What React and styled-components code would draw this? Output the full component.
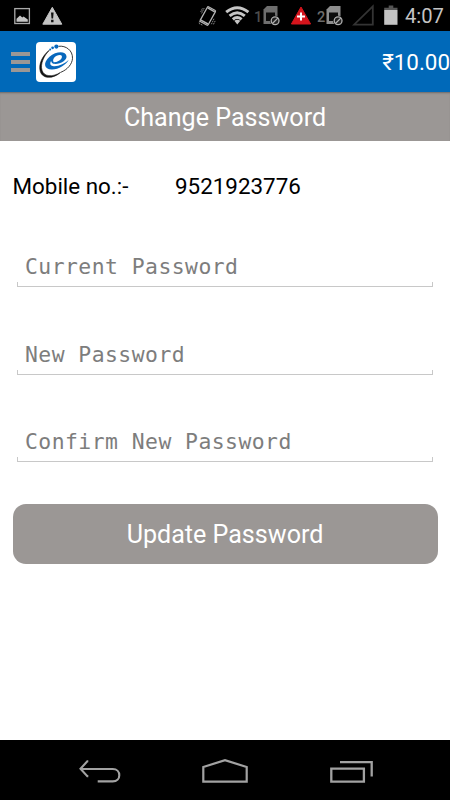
import React from "react";
import styled, { createGlobalStyle } from "styled-components";

const colors = {
  blue: "#0069b9",
  grey: "#9b9795",
  line: "#c8c8c8",
  hint: "#7d7d7d",
  icon: "#c4c4c4",
  nav: "#a2a2a2",
};

const GlobalStyle = createGlobalStyle`
  * {
    box-sizing: border-box;
  }
  body {
    margin: 0;
    background: #fff;
    font-family: Roboto, "Liberation Sans", sans-serif;
  }
`;

const Screen = styled.div`
  display: flex;
  flex-direction: column;
  width: 450px;
  height: 800px;
  overflow: hidden;
  background: #fff;
`;

const StatusBar = styled.div`
  display: flex;
  flex: none;
  height: 31px;
  padding: 0 7px 0 14px;
  background: #000;
`;

const Icon = styled.svg`
  display: block;
  flex: none;
  margin-left: ${(props) => props.$gap || 0}px;
`;

const Spacer = styled.div`
  flex: 1;
`;

const Clock = styled.div`
  width: 38px;
  margin-left: 7px;
  color: ${colors.icon};
  font-size: 20.2px;
  line-height: 33px;
  white-space: nowrap;
`;

const SimNumber = styled.span`
  width: 9px;
  margin-left: ${(props) => props.$gap}px;
  color: ${(props) => props.$color};
  font-size: 14.5px;
  font-weight: 500;
  line-height: 35px;
`;

const Header = styled.header`
  display: flex;
  flex: none;
  align-items: center;
  height: 61px;
  padding-left: 11px;
  background: ${colors.blue};
`;

const Menu = styled.div`
  display: flex;
  flex-direction: column;
  gap: 4px;
  width: 19px;
`;

const MenuLine = styled.span`
  height: 4px;
  background: ${colors.grey};
`;

const Logo = styled.div`
  width: 40px;
  height: 40px;
  margin-left: 6px;
  border-radius: 4px;
  background: #fff;
`;

const Balance = styled.div`
  margin-left: auto;
  padding-top: 1px;
  color: #fff;
  font-size: 22.4px;
  line-height: 30px;
`;

const TitleBar = styled.h1`
  flex: none;
  height: 49px;
  margin: 0;
  background: ${colors.grey};
  box-shadow: inset 0 2px 2px -1px rgba(0, 0, 0, 0.3);
  color: #fff;
  font-size: 25.1px;
  font-weight: 400;
  line-height: 51px;
  text-align: center;
`;

const Form = styled.form`
  display: flex;
  flex: 1;
  flex-direction: column;
  padding: 30px 12.5px 0;
`;

const Mobile = styled.div`
  display: flex;
  height: 30px;
  color: #000;
  font-size: 22.4px;
  line-height: 30px;
`;

const MobileLabel = styled.span`
  width: 162.5px;
`;

const Fields = styled.div`
  display: flex;
  flex-direction: column;
  gap: 47.5px;
  margin: 46px 4.5px 42px;
`;

/* holo style edit box: a bottom line with short ticks at both ends */
const Field = styled.div`
  height: 40px;
  background:
    linear-gradient(${colors.line}, ${colors.line}) left bottom / 1px 5px no-repeat,
    linear-gradient(${colors.line}, ${colors.line}) right bottom / 1px 5px no-repeat,
    linear-gradient(${colors.line}, ${colors.line}) left bottom / 100% 1px no-repeat;
`;

const Input = styled.input`
  display: block;
  width: 100%;
  height: 39px;
  padding: 0 8px;
  border: 0;
  outline: 0;
  background: transparent;
  font-family: "DejaVu Sans Mono", monospace;
  font-size: 21.4px;
  letter-spacing: 0.46px;

  &::placeholder {
    color: ${colors.hint};
    opacity: 1;
  }
`;

const Button = styled.button`
  height: 60px;
  padding: 0;
  border: 0;
  border-radius: 13px;
  background: ${colors.grey};
  color: #fff;
  font-family: inherit;
  font-size: 25.1px;
  line-height: 62px;
`;

const NavBar = styled.nav`
  display: flex;
  flex: none;
  height: 60px;
  padding-left: 78px;
  background: #000;
`;

const Gallery = () => (
  <Icon width="17" height="31" viewBox="14 0 17 31">
    <rect x="14.8" y="8.6" width="14.6" height="14.9" fill="none" stroke="#aaa" strokeWidth="1.3" />
    <path d="M16.5 21.8v-3l3.5-3.2 2.3 2 1.3-1 4.2 3v2.2z" fill={colors.icon} />
  </Icon>
);

const Warning = () => (
  <Icon $gap={11} width="21" height="31" viewBox="42 0 21 31">
    <path d="M52.3 7.3 61.8 24.2H42.8z" fill="#c4c4c4" stroke="#c4c4c4" strokeLinejoin="round" />
    <path d="M51 12.5h2.6l-.5 6h-1.6zM51.1 19.8h2.4v2.4h-2.4z" fill="#111" />
  </Icon>
);

const Vibrate = () => (
  <Icon width="20" height="31" viewBox="197 0 20 31">
    <g transform="rotate(29 207.8 16)" fill="none" stroke="#b5b5b5">
      <rect x="203.2" y="7.6" width="9.2" height="16.8" rx="1.2" strokeWidth="1.3" />
      <path d="M203.8 22.9h8M203.8 9h8" strokeWidth="1.5" />
    </g>
    <path
      d="M204.2 8l-2.6 5.4M202.4 8.4l-1.8 3.8M211.4 24.2l2.6-5.4M213.4 24.4l2-4M199.6 21l-.6 2.4 3.6 1.8"
      fill="none"
      stroke="#858585"
      strokeWidth="1"
      strokeDasharray="1.6 .7"
    />
  </Icon>
);

const Wifi = () => (
  <Icon $gap={8} width="25" height="31" viewBox="225.4 0 25 31">
    <g fill="none" stroke="#c6c6c6" strokeWidth="3">
      <path d="M226.6 12.2Q237.6 3.2 248.8 12.2" />
      <path d="M230 15.9Q237.6 9.6 245.2 15.9" />
      <path d="M233.2 19.3Q237.6 15.6 242 19.3" />
    </g>
    <path d="M234.7 20.8q3-2 6 0l-3 3.8z" fill="#c6c6c6" />
  </Icon>
);

const Sim = ({ body }) => (
  <Icon width="18" height="31" viewBox=".5 0 18 31">
    <path d="M4.5 6H15v18H1V9.5z" fill={body} />
    <path d="M3.5 12.5h9v8.5h-9z" fill="#0b0b0b" />
    <circle cx="12.6" cy="20.8" r="5" fill="#000" />
    <circle cx="12.6" cy="20.8" r="3.9" fill="#222" stroke="#b0b0b0" strokeWidth="1.3" />
    <path d="M9.9 18.1l5.4 5.4" stroke="#b0b0b0" strokeWidth="1.3" transform="matrix(-1 0 0 1 25.2 0)" />
  </Icon>
);

const Alert = () => (
  <Icon $gap={9} width="22" height="31" viewBox="290.8 0 22 31">
    <path d="M301.8 7 311.4 24H292.2z" fill="#d5141c" stroke="#d5141c" strokeLinejoin="round" />
    <path d="M301.8 12.6v8M297.8 16.6h8" stroke="#fff" strokeWidth="2" />
  </Icon>
);

const Signal = () => (
  <Icon $gap={8} width="23" height="31" viewBox="352 0 23 31">
    <path d="M354 24.7h18.8V6.3z" fill="none" stroke="#343434" strokeWidth="1.8" />
  </Icon>
);

const Battery = () => (
  <Icon $gap={9} width="14" height="31" viewBox="384 0 14 31">
    <path d="M388.7 5.5h4.6v2.3h4.2v2.2h-13.3V7.8h4.5z" fill="#555" />
    <path d="M384.2 10h13.3v14.8h-13.3z" fill="#c4c4c4" />
  </Icon>
);

const CompanyMark = () => (
  <svg width="40" height="40" viewBox="0 0 40 40">
    <path
      d="M13.3 8.3C6.5 13.5 2.3 22 4.2 29.3C6.6 37.4 17 37 24.6 30.4C15.8 35.6 8 34.6 6 28.2C4.1 22.2 7.8 13.8 13.3 8.3Z"
      fill="#111"
      stroke="#111"
      strokeWidth=".6"
    />
    <path
      d="M22.5 4.3C30 3.3 36.8 8.5 36.5 16.3C36.2 22.3 31.2 27.7 25 30.2"
      fill="none"
      stroke="#222"
      strokeWidth=".9"
    />
    <path
      fillRule="evenodd"
      d="M17.3 21.8C24 22.8 31 18.4 30.5 14.2C29.9 8.7 20 9.2 13.5 14.7C6.8 20.5 7.8 27.4 15.8 27.5C22.7 27.6 29.8 23 32.8 17.8C29.2 21.2 22.8 24.5 17.8 24.2C14.7 24 13.3 22.2 15.1 19.1C15.6 20.7 16 21.4 17.3 21.8ZM17.7 20.2C15.6 17.4 19.5 13.1 23.8 13C28.6 13.2 25 20.3 17.7 20.2Z"
      fill="#0868bd"
    />
    <circle cx="20.4" cy="4.6" r="2.1" fill="#0868bd" />
    <circle cx="16.6" cy="5.8" r="1.4" fill="#0868bd" />
    <circle cx="14.2" cy="7.4" r="1" fill="#0868bd" />
  </svg>
);

const Back = () => (
  <Icon width="44" height="60" viewBox="78 0 44 60">
    <path
      d="M80.8 29H112.7C121.5 29 121.5 41.4 112.7 41.4H97.7M88.3 21.3h-1L80.5 28.7 87.3 36.1h1"
      fill="none"
      stroke={colors.nav}
      strokeWidth="2.1"
    />
  </Icon>
);

const Home = () => (
  <Icon $gap={79} width="48" height="60" viewBox="201 0 48 60">
    <path d="M203.3 41.6V27L225 20.2 246.7 27V41.6z" fill="none" stroke={colors.nav} strokeWidth="2.2" />
  </Icon>
);

const Recents = () => (
  <Icon $gap={80} width="46" height="60" viewBox="329 0 46 60">
    <path d="M331.3 28.6h32.6v13h-32.6zM340 22.1h31.7v14.4" fill="none" stroke={colors.nav} strokeWidth="2.3" />
  </Icon>
);

const fields = ["Current Password", "New Password", "Confirm New Password"];

export default function App() {
  return (
    <Screen>
      <GlobalStyle />
      <StatusBar>
        <Gallery />
        <Warning />
        <Spacer />
        <Vibrate />
        <Wifi />
        <SimNumber $gap={4} $color="#4d4d4d">1</SimNumber>
        <Sim body="#6e6e6e" />
        <Alert />
        <SimNumber $gap={5} $color="#6b6b6b">2</SimNumber>
        <Sim body="#8d8d8d" />
        <Signal />
        <Battery />
        <Clock>4:07</Clock>
      </StatusBar>
      <Header>
        <Menu>
          <MenuLine />
          <MenuLine />
          <MenuLine />
        </Menu>
        <Logo>
          <CompanyMark />
        </Logo>
        <Balance>₹10.00</Balance>
      </Header>
      <TitleBar>Change Password</TitleBar>
      <Form>
        <Mobile>
          <MobileLabel>Mobile no.:-</MobileLabel>
          <span>9521923776</span>
        </Mobile>
        <Fields>
          {fields.map((label) => (
            <Field key={label}>
              <Input type="text" placeholder={label} />
            </Field>
          ))}
        </Fields>
        <Button type="button">Update Password</Button>
      </Form>
      <NavBar>
        <Back />
        <Home />
        <Recents />
      </NavBar>
    </Screen>
  );
}
